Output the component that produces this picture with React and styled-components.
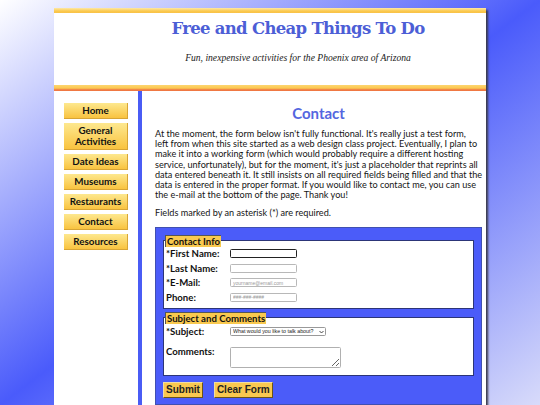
import React from 'react';
import styled, { createGlobalStyle } from 'styled-components';

const GlobalStyle = createGlobalStyle`
  html {
    min-height: 100%;
    background: linear-gradient(to bottom right, #ffffff 0%, #4a5bfb 50%, #d8dbfa 100%) fixed;
  }
  body {
    margin: 0;
    font-family: Lato, "Open Sans", sans-serif;
    color: #222;
  }
`;

const Page = styled.div`
  width: 432px;
  margin: 8px 0 0 54px;
  background: #fff;
  box-shadow: 2px 2px 2px #3a3a4a;
`;

const Bar = styled.div`
  height: ${props => props.$bottom ? '6px' : '5px'};
  background: ${props => props.$bottom
    ? 'linear-gradient(#fdd570 0%, #fbc850 55%, #f4914a 66%, #ee7040 100%)'
    : 'linear-gradient(#fde9a6 0%, #fbc94e 60%, #f9c247 100%)'};
`;

const Header = styled.header`
  height: 72px;
  padding: 4px 0 0 56px;
  box-sizing: border-box;
  text-align: center;
`;

const Title = styled.h1`
  margin: 0;
  font-family: "DejaVu Serif", serif;
  font-size: 16.5px;
  line-height: 24px;
  font-weight: 700;
  color: #4c5ed6;
  letter-spacing: -0.7px;
`;

const Tagline = styled.p`
  margin: 11px 0 0;
  font-family: "Liberation Serif", serif;
  font-style: italic;
  font-size: 9.6px;
  line-height: 12px;
  color: #222;
`;

const Body = styled.div`
  display: flex;
  min-height: 520px;
`;

const Sidebar = styled.nav`
  width: 84px;
  flex: none;
  border-right: 4px solid #4a5cf5;
  padding-top: 12px;
  display: flex;
  flex-direction: column;
  align-items: center;
  gap: 4px;
`;

const NavButton = styled.a`
  display: block;
  width: 63px;
  padding: 2px 0;
  font-size: 9.8px;
  line-height: 11px;
  font-weight: 700;
  text-align: center;
  color: #111;
  text-decoration: none;
  background: linear-gradient(#fde88f, #f9c340);
  border-right: 1px solid #d8a535;
  border-bottom: 1px solid #d8a535;
`;

const Content = styled.main`
  flex: 1;
  padding: 13px 13px 0;
`;

const Heading = styled.h2`
  margin: 0;
  font-size: 15px;
  line-height: 18px;
  font-weight: 700;
  text-align: center;
  color: #5466e0;
`;

const Text = styled.p`
  margin: ${props => props.$first ? '7px' : '8px'} 0 0;
  font-size: 9.15px;
  line-height: 10.2px;
  color: #151515;
  white-space: nowrap;
`;

const FormBox = styled.form`
  margin-top: 8px;
  padding: 7px 7px 6px;
  background: #4b5cf9;
  border: 1px solid #4050b0;
`;

const Fieldset = styled.fieldset`
  margin: 0 0 3px;
  padding: 0 2px ${props => props.$pb || '3px'};
  border: 1px solid #2c3578;
  background: #fff;
  min-width: 0;
`;

const Legend = styled.legend`
  margin-left: -1px;
  padding: 0 1px;
  background: #f9c94f;
  border-left: 1px solid #555;
  border-top: 1px solid #555;
  font-size: 9.6px;
  line-height: 11px;
  font-weight: 700;
  color: #111;
`;

const Row = styled.div`
  display: grid;
  grid-template-columns: 64px auto;
  align-items: ${props => props.$top ? 'start' : 'center'};
  height: ${props => props.$h || '14.5px'};
`;

const Label = styled.label`
  font-size: 9.6px;
  line-height: 11px;
  font-weight: 700;
  color: #111;
  padding-top: ${props => props.$pt || '0'};
`;

const Input = styled.input`
  width: 67px;
  height: 9px;
  box-sizing: border-box;
  padding: 0 2px;
  border: ${props => props.$focused ? '1.5px solid #222' : '1px solid #b8b8b8'};
  border-radius: 1.5px;
  font-family: "Liberation Sans", Arial, sans-serif;
  font-size: 5px;
  outline: none;
  &::placeholder { color: #9a9a9a; }
`;

const SelectWrap = styled.span`
  position: relative;
  display: flex;
  width: 96px;
  height: 9px;
`;

const Select = styled.select`
  width: 96px;
  height: 9px;
  box-sizing: border-box;
  appearance: none;
  margin: 0;
  padding: 0 8px 0 2px;
  border: 1px solid #999;
  border-radius: 1.5px;
  background: #fff;
  font-family: "Liberation Sans", Arial, sans-serif;
  font-size: 5.3px;
  line-height: 7px;
  color: #222;
`;

const Chevron = styled.svg`
  position: absolute;
  right: 2px;
  top: 2.5px;
  width: 5px;
  height: 4px;
  pointer-events: none;
`;

const TextArea = styled.textarea`
  width: 111px;
  height: 21px;
  margin: 7px 0 0;
  padding: 0;
  box-sizing: border-box;
  border: 1px solid #b0b0b0;
  border-radius: 1.5px;
  resize: both;
`;

const Buttons = styled.div`
  display: flex;
  gap: 11px;
  margin-top: 6px;
`;

const Button = styled.button`
  margin: 0;
  padding: 1px 2px;
  font-family: "Liberation Sans", Arial, sans-serif;
  font-size: 10px;
  line-height: 12px;
  font-weight: 700;
  color: #222;
  background: #f9c850;
  border: 1px solid;
  border-color: #f0dca0 #6a5418 #6a5418 #f0dca0;
`;

const navItems = ['Home', 'General Activities', 'Date Ideas', 'Museums', 'Restaurants', 'Contact', 'Resources'];

const introLines = [
  "At the moment, the form below isn't fully functional. It's really just a test form,",
  'left from when this site started as a web design class project. Eventually, I plan to',
  'make it into a working form (which would probably require a different hosting',
  "service, unfortunately), but for the moment, it's just a placeholder that reprints all",
  'data entered beneath it. It still insists on all required fields being filled and that the',
  'data is entered in the proper format. If you would like to contact me, you can use',
  'the e-mail at the bottom of the page. Thank you!'
];

export default function App() {
  return (
    <>
      <GlobalStyle />
      <Page>
        <Bar />
        <Header>
          <Title>Free and Cheap Things To Do</Title>
          <Tagline>Fun, inexpensive activities for the Phoenix area of Arizona</Tagline>
        </Header>
        <Bar $bottom />
        <Body>
          <Sidebar>
            {navItems.map(item => (
              <NavButton key={item} href="#">{item}</NavButton>
            ))}
          </Sidebar>
          <Content>
            <Heading>Contact</Heading>
            <Text $first>
              {introLines.map((line, i) => (
                <React.Fragment key={i}>{line}{i < introLines.length - 1 && <br />}</React.Fragment>
              ))}
            </Text>
            <Text>Fields marked by an asterisk (*) are required.</Text>
            <FormBox onSubmit={e => e.preventDefault()}>
              <Fieldset>
                <Legend>Contact Info</Legend>
                <Row>
                  <Label>*First Name:</Label>
                  <Input $focused />
                </Row>
                <Row>
                  <Label>*Last Name:</Label>
                  <Input />
                </Row>
                <Row>
                  <Label>*E-Mail:</Label>
                  <Input placeholder="yourname@email.com" />
                </Row>
                <Row>
                  <Label>Phone:</Label>
                  <Input placeholder="###-###-####" />
                </Row>
              </Fieldset>
              <Fieldset $pb="7px">
                <Legend>Subject and Comments</Legend>
                <Row $h="16px">
                  <Label>*Subject:</Label>
                  <SelectWrap>
                    <Select defaultValue="">
                      <option value="">What would you like to talk about?</option>
                    </Select>
                    <Chevron viewBox="0 0 10 8">
                      <path d="M1 2 L5 6 L9 2" fill="none" stroke="#333" strokeWidth="1.8" />
                    </Chevron>
                  </SelectWrap>
                </Row>
                <Row $top $h="28px">
                  <Label $pt="6px">Comments:</Label>
                  <TextArea />
                </Row>
              </Fieldset>
              <Buttons>
                <Button type="submit">Submit</Button>
                <Button type="reset">Clear Form</Button>
              </Buttons>
            </FormBox>
          </Content>
        </Body>
      </Page>
    </>
  );
}
